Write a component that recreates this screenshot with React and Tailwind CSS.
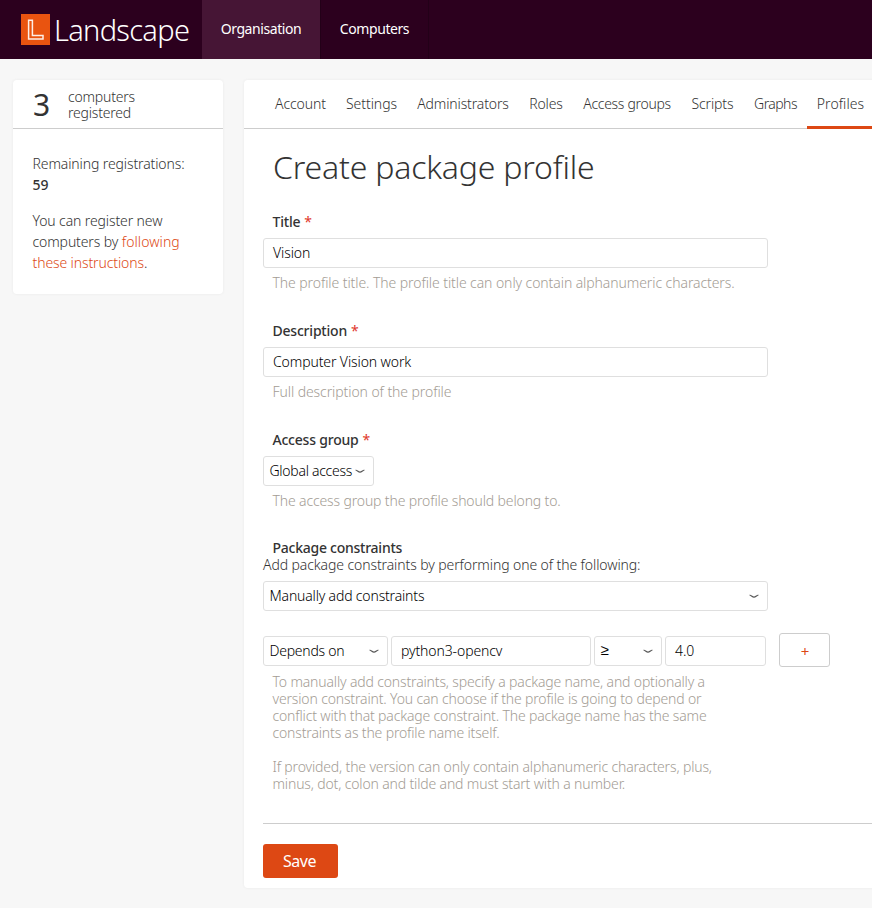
const tabs = [
  { label: 'Account', box: 'w-[71px] tracking-[-0.008em]' },
  { label: 'Settings', box: 'w-[71px] tracking-[-0.004em]' },
  { label: 'Administrators', box: 'w-[112px] tracking-[-0.01em]' },
  { label: 'Roles', box: 'w-[54px] tracking-[-0.008em]' },
  { label: 'Access groups', box: 'w-[108px] tracking-[-0.022em]' },
  { label: 'Scripts', box: 'w-[63px] tracking-[-0.01em]' },
  { label: 'Graphs', box: 'w-[63px] tracking-[-0.04em]' },
  { label: 'Profiles', box: 'w-[67px] tracking-[0.005em]', active: true },
]

function Logo() {
  return (
    <div className="flex w-[202px] items-start pl-[21px]">
      <svg width="30" height="31" viewBox="0 0 30 31" className="mt-[14px] shrink-0">
        <rect width="29" height="31" fill="#e95410" />
        <path
          d="M7.6 6.3H11.4V21.6H22V25H7.6Z"
          fill="none"
          stroke="#fdeee6"
          strokeWidth="1.5"
        />
      </svg>
      <span className="ml-[3px] mt-[10px] text-[29px] leading-[40px] font-light tracking-[-0.024em] text-white">
        Landscape
      </span>
    </div>
  )
}

function Label({ children, required }) {
  return (
    <div className="flex h-[25px] items-start pl-[9.5px] leading-[18px] font-medium tracking-[-0.015em]">
      {children}
      {required && <span className="ml-1 text-[14px] leading-[17px] font-normal text-[#df382c]">*</span>}
    </div>
  )
}

function Help({ children, className = 'tracking-[-0.006em]' }) {
  return (
    <p className={`mt-1.5 pl-[9.5px] leading-[17px] whitespace-nowrap text-[#a39c94] ${className}`}>
      {children}
    </p>
  )
}

function Input({ value, className }) {
  return (
    <div className={`flex h-[30px] items-center rounded-[3px] border border-[#dfdfdf] bg-white pb-[2px] pl-[9px] text-black ${className}`}>
      {value}
    </div>
  )
}

function Select({ value, className }) {
  return (
    <div className={`flex h-[30px] items-center justify-between rounded-[3px] border border-[#dfdfdf] bg-white pr-2 pl-[5.5px] whitespace-nowrap text-black ${className}`}>
      <span className="pb-[2px]">{value}</span>
      <svg width="10" height="5" viewBox="0 0 10 5" className="shrink-0" fill="none" stroke="#555" strokeWidth="1.2">
        <path d="M.6 1C2.2 1.5 3.5 3.2 5 3.2S7.8 1.5 9.4 1" />
      </svg>
    </div>
  )
}

export default function App() {
  return (
    <div className="h-[908px] w-[872px] overflow-hidden bg-[#f7f7f7] font-['Noto_Sans',sans-serif] text-[14px] font-light tracking-[-0.008em] text-[#333]">
      <header className="flex h-[59px] bg-[#2c001e] text-white">
        <Logo />
        <a className="flex w-[119px] items-center justify-center border-r border-[#230018] bg-[#461535] pb-[2px] font-normal tracking-[-0.03em]">
          Organisation
        </a>
        <a className="flex w-[108px] items-center justify-center border-r border-[#230018] pb-[2px] font-normal tracking-[-0.03em]">
          Computers
        </a>
      </header>

      <div className="flex items-start gap-[21px] pt-[21px] pl-[13px]">
        <aside className="h-[214px] w-[210px] shrink-0 rounded bg-white shadow-[0_0_2px_1px_#f0f0f0]">
          <div className="flex h-[49px] border-b border-[#cdcdcd]">
            <span className="w-[55px] pt-[5px] pl-5 text-[30px] leading-[40px] font-normal">3</span>
            <p className="pt-[9px] leading-[16px] tracking-[-0.014em]">
              computers
              <br />
              registered
            </p>
          </div>
          <div className="pt-6 pl-[19.5px] leading-[21px]">
            <p>
              Remaining registrations:
              <br />
              <span className="font-medium">59</span>
            </p>
            <p className="mt-[15px] whitespace-nowrap">
              You can register new
              <br />
              computers by <a className="tracking-[0.005em] text-[#dd4814]">following</a>
              <br />
              <a className="text-[#dd4814]">these instructions</a>.
            </p>
          </div>
        </aside>

        <main className="h-[808px] w-[640px] shrink-0 rounded bg-white shadow-[0_0_2px_1px_#f0f0f0]">
          <nav className="flex h-[49px] border-b border-[#cdcdcd] pl-[21px]">
            {tabs.map((tab) => (
              <a
                key={tab.label}
                className={`flex h-[49px] items-center justify-center whitespace-nowrap ${tab.box} ${
                  tab.active ? 'border-b-[3px] border-[#dd4814]' : 'pb-[3px]'
                }`}
              >
                {tab.label}
              </a>
            ))}
          </nav>

          <h1 className="mt-[18px] pl-[29px] text-[32px] leading-[40px] font-light tracking-[-0.006em]">
            Create package profile
          </h1>

          <form className="mt-[26px] pl-[19px]">
            <Label required>Title</Label>
            <Input value="Vision" className="w-[505px]" />
            <Help>The profile title. The profile title can only contain alphanumeric characters.</Help>

            <div className="mt-[31px]">
              <Label required>Description</Label>
              <Input value="Computer Vision work" className="w-[505px]" />
              <Help>Full description of the profile</Help>
            </div>

            <div className="mt-[31px]">
              <Label required>Access group</Label>
              <Select value="Global access" className="w-[111px] tracking-[-0.02em]" />
              <Help className="tracking-[-0.01em]">The access group the profile should belong to.</Help>
            </div>

            <div className="mt-[30px]">
              <div className="h-[17px] pl-[9.5px] leading-[18px] font-medium tracking-[-0.018em]">Package constraints</div>
              <p className="leading-[18px] tracking-[-0.007em]">Add package constraints by performing one of the following:</p>
              <Select value="Manually add constraints" className="mt-[7px] w-[505px] tracking-[-0.012em]" />
              <div className="mt-[22px] flex h-[34px] items-start">
                <Select value="Depends on" className="mt-[3px] w-[125px] tracking-[-0.018em]" />
                <Input value="python3-opencv" className="mt-[3px] ml-[3px] w-[200px]" />
                <Select value="≥" className="mt-[3px] ml-[3px] w-[68px] font-['Liberation_Sans',sans-serif] text-[15px]" />
                <Input value="4.0" className="mt-[3px] ml-[3px] w-[101px]" />
                <button
                  type="button"
                  className="ml-[13px] flex h-[34px] w-[51px] items-center justify-center rounded-[3px] border border-[#cdcdcd] bg-white pt-[2px] pl-[1px] text-[15px] font-normal text-[#dd4814]"
                >
                  +
                </button>
              </div>
              <Help className="tracking-[-0.011em]">
                To manually add constraints, specify a package name, and optionally a
                <br />
                version constraint. You can choose if the profile is going to depend or
                <br />
                conflict with that package constraint. The package name has the same
                <br />
                constraints as the profile name itself.
                <br />
                <br />
                If provided, the version can only contain alphanumeric characters, plus,
                <br />
                minus, dot, colon and tilde and must start with a number.
              </Help>
            </div>

            <div className="mt-[31px] border-t border-[#cdcdcd] pt-5">
              <button
                type="button"
                className="block h-[34px] w-[75px] rounded-[3px] bg-[#dd4814] pr-[2px] text-[16px] font-normal tracking-[-0.03em] text-white"
              >
                Save
              </button>
            </div>
          </form>
        </main>
      </div>
    </div>
  )
}
